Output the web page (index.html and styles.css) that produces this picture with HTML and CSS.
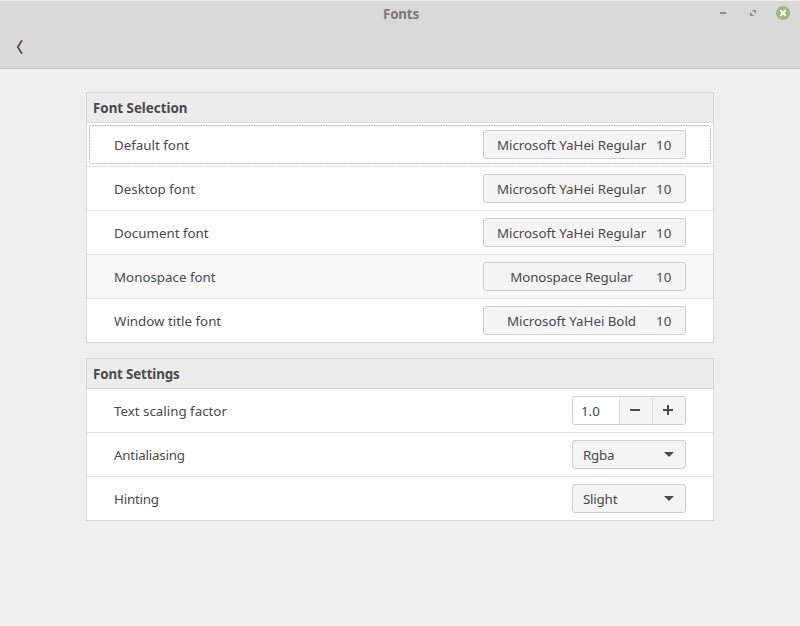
FILE: index.html
```html
<!DOCTYPE html>
<html lang="en">
<head>
<meta charset="utf-8">
<title>Fonts</title>
<link rel="stylesheet" href="styles.css">
</head>
<body>
<header class="titlebar">
  <div class="caption">
    <h1 class="title">Fonts</h1>
    <div class="controls">
      <svg width="14" height="14" viewBox="0 0 14 14"><path d="M4 6h6v2H4z" fill="#8f8f8f"/></svg>
      <svg width="14" height="14" viewBox="0 0 14 14"><path d="M6 4h4v4zM4 6l4 4H4z" fill="#8f8f8f"/></svg>
      <svg width="14" height="14" viewBox="0 0 14 14"><circle cx="7" cy="7" r="7" fill="#9ab87c"/><path d="M5 5l4 4M9 5L5 9" stroke="#fff" stroke-width="2" stroke-linecap="square" fill="none"/></svg>
    </div>
  </div>
  <svg class="back" width="8" height="16" viewBox="0 0 8 16"><path d="M6 1.2L1.8 8L6 14.8" stroke="#5a4f50" stroke-width="1.8" fill="none"/></svg>
</header>
<main class="content">
  <section class="panel">
    <h2 class="heading">Font Selection</h2>
    <div class="row focused"><span class="label">Default font</span><div class="font-button"><span class="face">Microsoft YaHei Regular</span><span class="size">10</span></div></div>
    <div class="row"><span class="label">Desktop font</span><div class="font-button"><span class="face">Microsoft YaHei Regular</span><span class="size">10</span></div></div>
    <div class="row"><span class="label">Document font</span><div class="font-button"><span class="face">Microsoft YaHei Regular</span><span class="size">10</span></div></div>
    <div class="row hovered"><span class="label">Monospace font</span><div class="font-button"><span class="face snug">Monospace Regular</span><span class="size">10</span></div></div>
    <div class="row"><span class="label">Window title font</span><div class="font-button"><span class="face">Microsoft YaHei Bold</span><span class="size">10</span></div></div>
  </section>
  <section class="panel">
    <h2 class="heading snug">Font Settings</h2>
    <div class="row"><span class="label">Text scaling factor</span>
      <div class="spin"><span class="value">1.0</span>
        <span class="step"><svg width="12" height="12" viewBox="0 0 12 12"><path d="M1 5h10v2H1z" fill="#4a4a4a"/></svg></span>
        <span class="step"><svg width="12" height="12" viewBox="0 0 12 12"><path d="M1 5h4V1h2v4h4v2H7v4H5V7H1z" fill="#4a4a4a"/></svg></span>
      </div>
    </div>
    <div class="row"><span class="label tight">Antialiasing</span><div class="combo"><span class="tight">Rgba</span><svg width="10" height="5" viewBox="0 0 10 5"><path d="M0 0h10L5 5z" fill="#4a4a4a"/></svg></div></div>
    <div class="row"><span class="label tight">Hinting</span><div class="combo"><span class="tight">Slight</span><svg width="10" height="5" viewBox="0 0 10 5"><path d="M0 0h10L5 5z" fill="#4a4a4a"/></svg></div></div>
  </section>
</main>
</body>
</html>
```
FILE: styles.css
```css
* { box-sizing: border-box; }
body {
  margin: 0;
  height: 626px;
  overflow: hidden;
  background: #efefef;
  color: #4a4a4a;
  font: 13.33px/18px "Noto Sans", "Open Sans", sans-serif;
}
svg { display: block; }
.titlebar {
  height: 69px;
  background: #d9d9d9;
  border-top: 1px solid #efefef;
  border-bottom: 1px solid #c5c5c5;
}
.caption {
  display: grid;
  grid-template-columns: 1fr auto 1fr;
  height: 38px;
  padding: 4px 10px 0 12px;
}
.title {
  grid-column: 2;
  margin: 0;
  font-size: 13.33px;
  line-height: 18px;
  letter-spacing: -0.15px;
  color: #7a7a7a;
}
.controls {
  display: flex;
  gap: 16px;
  justify-self: end;
  padding-top: 1px;
}
.back { margin: 0 0 0 16px; }
.content {
  display: flex;
  flex-direction: column;
  gap: 15px;
  padding: 23px 86px 0;
}
.panel {
  background: #fff;
  border: 1px solid #d6d6d6;
}
.heading {
  margin: 0;
  height: 30px;
  padding: 6px 6px 0;
  background: #ececec;
  border-bottom: 1px solid #d6d6d6;
  font-size: 13.33px;
  line-height: 18px;
}
.row {
  position: relative;
  display: flex;
  justify-content: space-between;
  align-items: center;
  height: 44px;
  padding: 0 27px;
  border-bottom: 1px solid #e3e3e3;
}
.row:last-child { height: 43px; border-bottom: 0; }
.hovered { background: #f7f7f7; }
.focused::after {
  content: "";
  position: absolute;
  inset: 2px;
  border-radius: 2px;
  background:
    repeating-linear-gradient(90deg, #bfbfbf 0 2px, #f0f0f0 2px 3px) top / 100% 1px no-repeat,
    repeating-linear-gradient(90deg, #bfbfbf 0 2px, #f0f0f0 2px 3px) bottom / 100% 1px no-repeat,
    repeating-linear-gradient(#bfbfbf 0 2px, #f0f0f0 2px 3px) left / 1px 100% no-repeat,
    repeating-linear-gradient(#bfbfbf 0 2px, #f0f0f0 2px 3px) right / 1px 100% no-repeat;
}
.font-button, .combo, .spin {
  display: flex;
  height: 29px;
  border: 1px solid #cdcdcd;
  border-radius: 3px;
  background: #f4f4f4;
}
.font-button { width: 203px; align-items: center; padding: 0 14px 0 13px; }
.face { flex: 1; min-width: 0; text-align: center; white-space: nowrap; letter-spacing: -0.03px; }
.size { width: 15px; margin-left: 10px; letter-spacing: 0.1px; }
.snug { letter-spacing: -0.12px; }
.tight { letter-spacing: -0.2px; }
.combo {
  width: 114px;
  align-items: center;
  justify-content: space-between;
  padding: 0 11px 0 10px;
}
.spin { width: 114px; background: #fff; overflow: hidden; }
.value { width: 46px; padding: 5px 0 0 8px; }
.step {
  display: flex;
  flex: 1;
  align-items: center;
  padding: 0 0 2px 9px;
  background: #f4f4f4;
  border-left: 1px solid #e0e0e0;
}
```
